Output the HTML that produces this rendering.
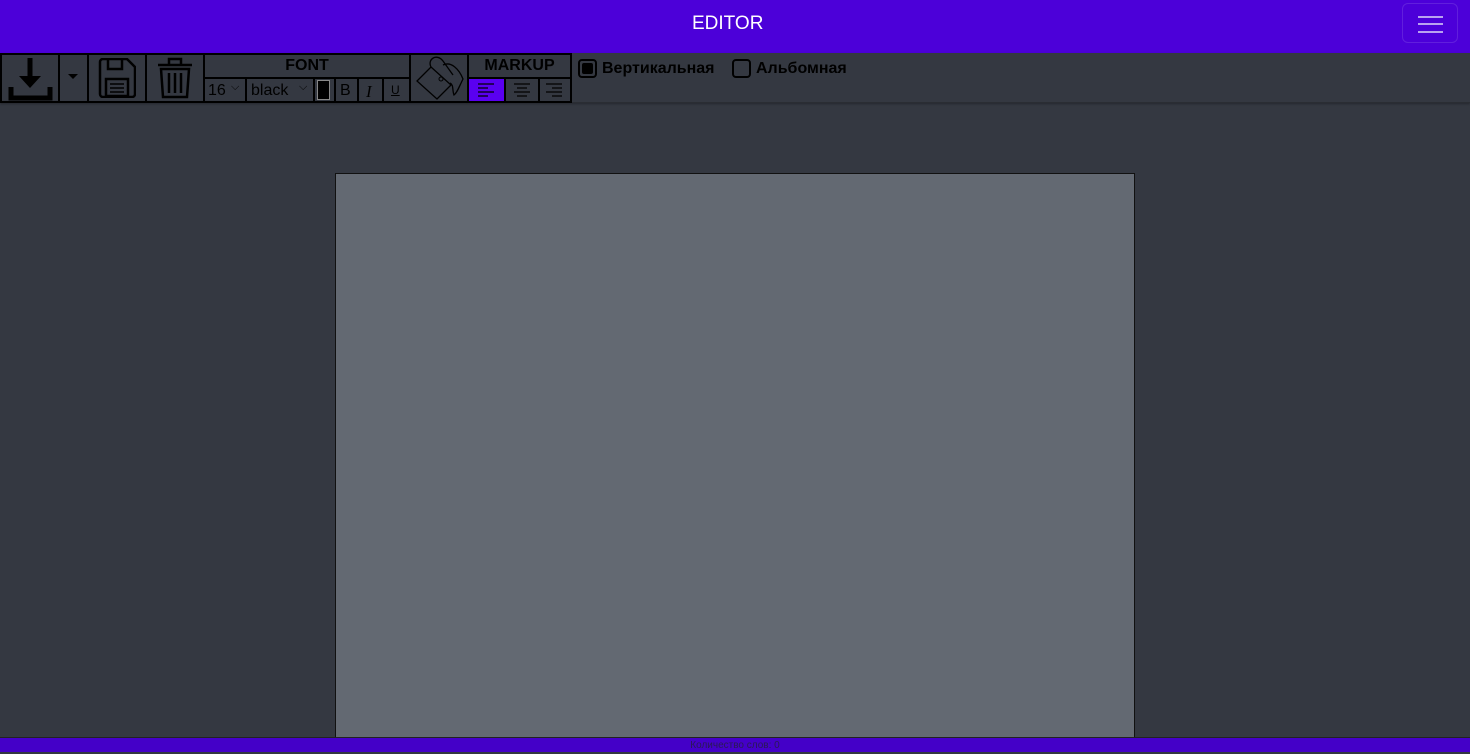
<!DOCTYPE html>
<html><head><meta charset="utf-8"><style>
*{box-sizing:border-box;margin:0;padding:0}
body{width:1470px;height:752px;overflow:hidden;background:#343841;font-family:"Liberation Sans","DejaVu Sans",sans-serif;position:relative}
.hdr{position:absolute;left:0;top:0;width:1470px;height:53px;background:#4c00d9;color:#fff;font-size:19px;line-height:48px}
.burger{position:absolute;left:1402px;top:3px;width:56px;height:40px;border:1px solid rgba(255,255,255,.12);border-radius:6px}
.burger i{position:absolute;left:15px;width:25px;height:2px;background:#b9a2f0}
.tb{position:absolute;left:0;top:53px;width:1470px;height:50px;background:#343841;border-bottom:1px solid #2a2d33;box-shadow:0 1px 2px rgba(0,0,0,.3)}
.b{position:absolute;border:2px solid #000}
.t{position:absolute;font-size:16px;color:#000}
.page{position:absolute;left:335px;top:173px;width:800px;height:570px;background:#636972;border:1px solid #111}
.ftr{position:absolute;left:0;top:737px;width:1470px;height:15px;background:#4400c8;border-top:1px solid #222;text-align:center;font-size:10px;line-height:16px;color:#2a1a55}
</style></head><body>
<div class="hdr"><span style="position:absolute;left:692px;top:0">EDITOR</span><div class="burger"><i style="top:12px"></i><i style="top:19px"></i><i style="top:27px"></i></div></div>
<div class="tb"></div>
<div class="b" style="left:0;top:53px;width:60px;height:50px"></div>
<svg style="position:absolute;left:7px;top:56px" width="46" height="46" viewBox="0 0 46 46"><path d="M23 2v22" stroke="#000" stroke-width="5"/><path d="M12 20l11 12 11-12z" fill="#000"/><path d="M4 31v11h39V31" stroke="#000" stroke-width="5" fill="none"/></svg>
<div class="b" style="left:58px;top:53px;width:31px;height:50px"></div>
<svg style="position:absolute;left:68px;top:74px" width="10" height="6"><path d="M0 0h10L5 5z" fill="#000"/></svg>
<div class="b" style="left:87px;top:53px;width:60px;height:50px"></div>
<svg style="position:absolute;left:98px;top:58px" width="38" height="40" viewBox="0 0 38 40"><path d="M2 4a3 3 0 0 1 3-3h24l8 8v27a3 3 0 0 1-3 3H5a3 3 0 0 1-3-3z" fill="none" stroke="#000" stroke-width="2.5"/><path d="M10 1v10h14V1" fill="none" stroke="#000" stroke-width="2.5"/><rect x="8" y="21" width="22" height="17" fill="none" stroke="#000" stroke-width="2.5"/><path d="M12 26h14M12 30h14M12 34h14" stroke="#000" stroke-width="1.5"/></svg>
<div class="b" style="left:145px;top:53px;width:60px;height:50px"></div>
<svg style="position:absolute;left:157px;top:56px" width="36" height="44" viewBox="0 0 36 44"><path d="M1 9h34M12 8V3h12v5" fill="none" stroke="#000" stroke-width="2.5"/><path d="M4 13h28l-2 28H6z" fill="none" stroke="#000" stroke-width="2.5"/><path d="M12 17v20M18 17v20M24 17v20" stroke="#000" stroke-width="2.5"/></svg>
<div class="b" style="left:203px;top:53px;width:208px;height:26px"></div>
<div class="t" style="left:203px;top:57px;width:208px;text-align:center;font-weight:bold">FONT</div>
<div class="b" style="left:203px;top:77px;width:44px;height:26px"></div>
<div class="t" style="left:208px;top:82px">16</div><div class="t" style="left:231px;top:81px;font-size:11px">⌵</div>
<div class="b" style="left:245px;top:77px;width:70px;height:26px"></div>
<div class="t" style="left:251px;top:82px">black</div><div class="t" style="left:299px;top:81px;font-size:11px">⌵</div>
<div class="b" style="left:313px;top:77px;width:23px;height:26px"></div>
<div style="position:absolute;left:317px;top:80px;width:13px;height:20px;background:#000;border:1px solid #888"></div>
<div class="b" style="left:334px;top:77px;width:25px;height:26px"></div><div class="t" style="left:340px;top:82px">B</div>
<div class="b" style="left:357px;top:77px;width:27px;height:26px"></div><div class="t" style="left:366px;top:82px;font-style:italic;font-family:'Liberation Serif',serif;font-size:17px">I</div>
<div class="b" style="left:382px;top:77px;width:29px;height:26px"></div><div class="t" style="left:391px;top:83px;font-size:12px;text-decoration:underline">U</div>
<div class="b" style="left:409px;top:53px;width:60px;height:50px"></div>
<svg style="position:absolute;left:413px;top:55px" width="52" height="46" viewBox="0 0 52 46"><path d="M18 12l20 18-14 14-20-18z" fill="none" stroke="#000" stroke-width="1.3"/><path d="M18 12C14 4 24 -2 30 6l10 14" fill="none" stroke="#000" stroke-width="1.3"/><circle cx="28" cy="24" r="2" fill="none" stroke="#000"/><path d="M30 10c8-4 16 4 20 14-4 8-6 14-9 16-2-5 0-10-4-12" fill="none" stroke="#000" stroke-width="1.3"/></svg>
<div class="b" style="left:467px;top:53px;width:105px;height:26px"></div>
<div class="t" style="left:467px;top:57px;width:105px;text-align:center;font-weight:bold">MARKUP</div>
<div class="b" style="left:467px;top:77px;width:39px;height:26px;background:#5a00f0"></div>
<div class="b" style="left:504px;top:77px;width:36px;height:26px"></div>
<div class="b" style="left:538px;top:77px;width:34px;height:26px"></div>
<svg style="position:absolute;left:478px;top:83px" width="85" height="14"><path d="M0 1h16M0 5h10M0 9h16M0 13h10" stroke="#000" stroke-width="1.3"/><path d="M36 1h16M39 5h10M36 9h16M39 13h10" stroke="#000" stroke-width="1.3"/><path d="M68 1h16M74 5h10M68 9h16M74 13h10" stroke="#000" stroke-width="1.3"/></svg>
<div style="position:absolute;left:578px;top:59px;width:19px;height:19px;border:2px solid #000;border-radius:4px"><div style="margin:2px;width:11px;height:11px;background:#000;border-radius:2px"></div></div>
<div class="t" style="left:602px;top:60px;font-weight:bold">Вертикальная</div>
<div style="position:absolute;left:732px;top:59px;width:19px;height:19px;border:2px solid #000;border-radius:4px"></div>
<div class="t" style="left:756px;top:60px;font-weight:bold">Альбомная</div>
<div class="page"></div>
<div class="ftr">Количество слов: 0</div>
</body></html>
